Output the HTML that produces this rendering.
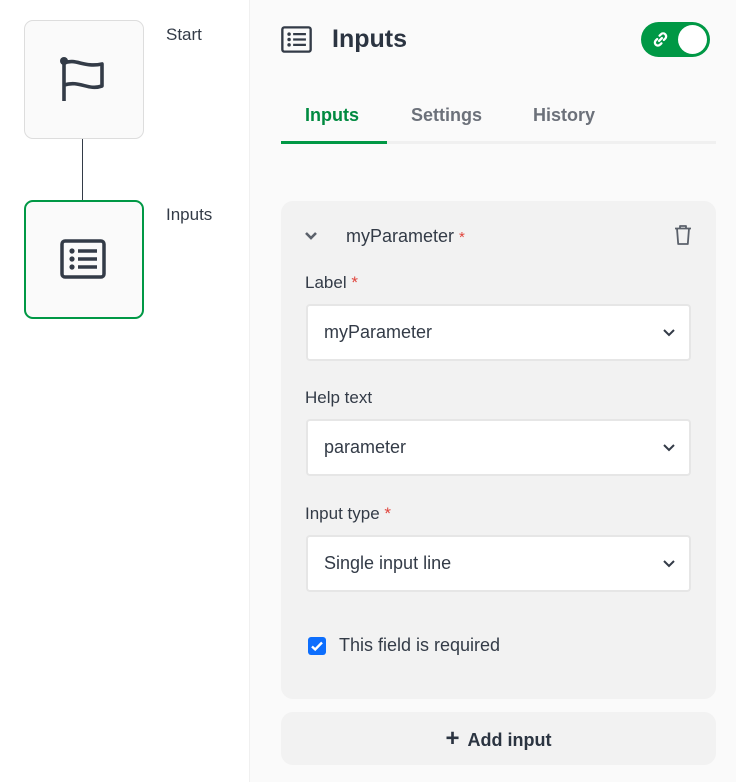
<!DOCTYPE html>
<html><head><meta charset="utf-8"><style>
*{box-sizing:border-box;margin:0;padding:0}
body{width:736px;height:782px;overflow:hidden;background:#fafafa;font-family:"Liberation Sans",sans-serif;color:#333b47;position:relative}
.abs{position:absolute}
.left{left:0;top:0;width:250px;height:782px;background:#fff;border-right:1px solid #f0f0f0}
.node{width:120px;height:119px;border-radius:9px;background:#fafafa}
.lbl{font-size:17px;color:#333b47}
.tab{font-size:18px;font-weight:bold;top:105px;color:#6c717a}
.card{left:281px;top:201px;width:435px;height:498px;background:#f2f2f2;border-radius:12px}
.fl{font-size:17px;left:305px}
.inp{left:306px;width:385px;height:57px;background:#fff;border:2px solid #e6e6e6;border-radius:4px;font-size:18px;padding-left:16px;line-height:53px}
.star{color:#e0443c}
.chev{position:absolute;right:13px;top:22px}
</style></head><body>
<div class="abs left"></div>
<div class="abs node" style="left:24px;top:20px;border:1px solid #ddd"></div>
<svg class="abs" style="left:58px;top:55px" width="50" height="50" viewBox="0 0 50 50"><circle cx="6" cy="6" r="4" fill="#333b47"/><path d="M6 6V46M6 8c12-5 20 5 38 1v22c-14 5-22-6-38-1" fill="none" stroke="#333b47" stroke-width="3.6" stroke-linejoin="round"/></svg>
<div class="abs" style="left:82px;top:139px;width:1px;height:61px;background:#333b47"></div>
<div class="abs node" style="left:24px;top:200px;border:2.5px solid #009845"></div>
<svg class="abs" style="left:60px;top:239px" width="46" height="40" viewBox="0 0 46 40"><rect x="2" y="2" width="42" height="36" rx="3" fill="none" stroke="#333b47" stroke-width="3.5"/><circle cx="12" cy="12" r="2.6" fill="#333b47"/><circle cx="12" cy="20" r="2.6" fill="#333b47"/><circle cx="12" cy="28" r="2.6" fill="#333b47"/><path d="M18 12h19M18 20h19M18 28h19" stroke="#333b47" stroke-width="3.4"/></svg>
<div class="abs lbl" style="left:166px;top:25px">Start</div>
<div class="abs lbl" style="left:166px;top:205px">Inputs</div>

<svg class="abs" style="left:281px;top:26px" width="31" height="27" viewBox="0 0 46 40"><rect x="2" y="2" width="42" height="36" rx="3" fill="none" stroke="#333b47" stroke-width="3.5"/><circle cx="12" cy="12" r="2.6" fill="#333b47"/><circle cx="12" cy="20" r="2.6" fill="#333b47"/><circle cx="12" cy="28" r="2.6" fill="#333b47"/><path d="M18 12h19M18 20h19M18 28h19" stroke="#333b47" stroke-width="3.4"/></svg>
<div class="abs" style="left:332px;top:25px;font-size:25px;font-weight:bold;color:#2b3441">Inputs</div>
<div class="abs" style="left:641px;top:22px;width:69px;height:35px;border-radius:18px;background:#009845">
<svg class="abs" style="left:10px;top:8px" width="19" height="19" viewBox="0 0 20 20"><path d="M8.5 11.5l3-3M9 6l1.5-1.5a3 3 0 0 1 4.5 4.5L13.5 10.5M11 14l-1.5 1.5a3 3 0 0 1-4.5-4.5L6.5 9.5" fill="none" stroke="#fff" stroke-width="2.4" stroke-linecap="round"/></svg>
<div class="abs" style="left:37px;top:3px;width:29px;height:29px;border-radius:50%;background:#fff"></div></div>

<div class="abs tab" style="left:305px;color:#008a40">Inputs</div>
<div class="abs tab" style="left:411px">Settings</div>
<div class="abs tab" style="left:533px">History</div>
<div class="abs" style="left:281px;top:141px;width:435px;height:3px;background:#f0f0f0"></div>
<div class="abs" style="left:281px;top:141px;width:106px;height:3px;background:#009845"></div>

<div class="abs card"></div>
<svg class="abs" style="left:304px;top:231px" width="14" height="10" viewBox="0 0 14 10"><path d="M2 2l5 5 5-5" fill="none" stroke="#5b616b" stroke-width="2.6"/></svg>
<div class="abs" style="left:346px;top:226px;font-size:18px">myParameter <span class="star" style="font-size:15px">*</span></div>
<svg class="abs" style="left:673px;top:224px" width="20" height="22" viewBox="0 0 20 22"><path d="M2 4.5h16M7 4.5V2h6v2.5M4 4.5l1.2 15.5h9.6L16 4.5" fill="none" stroke="#5b616b" stroke-width="1.8" stroke-linejoin="round"/></svg>

<div class="abs fl" style="top:273px">Label <span class="star">*</span></div>
<div class="abs inp" style="top:304px">myParameter<svg class="chev" width="14" height="10" viewBox="0 0 14 10"><path d="M2 2l5 5 5-5" fill="none" stroke="#333b47" stroke-width="2"/></svg></div>
<div class="abs fl" style="top:388px">Help text</div>
<div class="abs inp" style="top:419px">parameter<svg class="chev" width="14" height="10" viewBox="0 0 14 10"><path d="M2 2l5 5 5-5" fill="none" stroke="#333b47" stroke-width="2"/></svg></div>
<div class="abs fl" style="top:504px">Input type <span class="star">*</span></div>
<div class="abs inp" style="top:535px">Single input line<svg class="chev" width="14" height="10" viewBox="0 0 14 10"><path d="M2 2l5 5 5-5" fill="none" stroke="#333b47" stroke-width="2"/></svg></div>

<div class="abs" style="left:308px;top:637px;width:18px;height:18px;border-radius:3px;background:#0d6efd">
<svg width="18" height="18" viewBox="0 0 18 18"><path d="M4 9.5l3.2 3L14 5.5" fill="none" stroke="#fff" stroke-width="2.4"/></svg></div>
<div class="abs" style="left:339px;top:635px;font-size:18px">This field is required</div>

<div class="abs" style="left:281px;top:712px;width:435px;height:53px;border-radius:12px;background:#f2f2f2;text-align:center;line-height:53px;font-size:18px;font-weight:bold;color:#2b3441"><span style="font-size:24px;margin-right:8px">+</span>Add input</div>
</body></html>
